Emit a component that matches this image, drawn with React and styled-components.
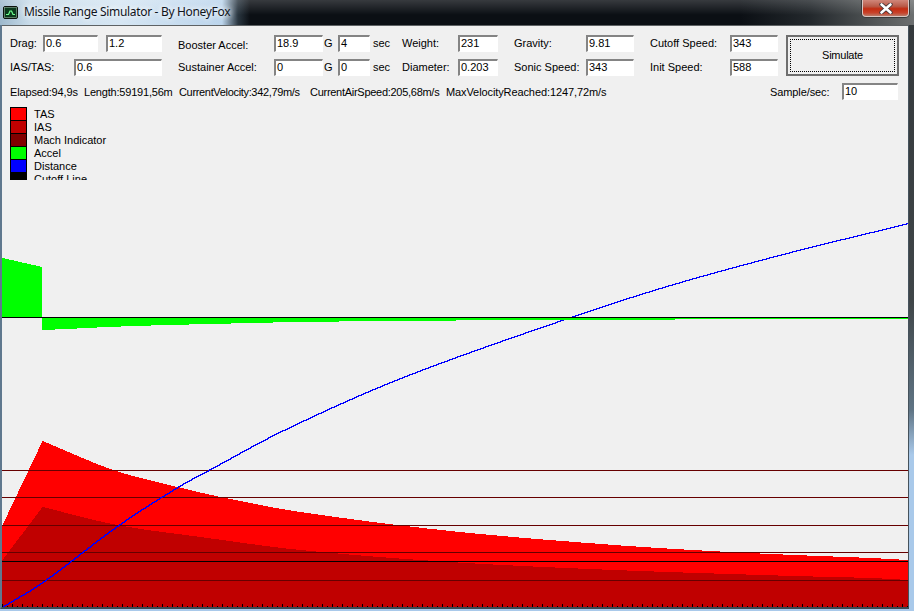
import React from "react";
import styled, { createGlobalStyle } from "styled-components";

const Global = createGlobalStyle`
  html, body { margin: 0; padding: 0; background: #a9c9ea; }
`;

const Desktop = styled.div`
  width: 914px;
  height: 611px;
  overflow: hidden;
  display: flex;
  flex-direction: column;
  font-family: "Liberation Sans", Arial, sans-serif;
  font-size: 11px;
  color: #000;
  background: linear-gradient(180deg, #33383b 0, #3f4548 300px, #5f7484 410px, #a9c9ea 455px, #a9c9ea 100%);
`;

const TitleBar = styled.header`
  height: 25px;
  flex: none;
  display: flex;
  align-items: flex-start;
  background:
    linear-gradient(180deg, rgba(255, 255, 255, 0.18) 0, rgba(255, 255, 255, 0) 60%),
    linear-gradient(90deg, #9db8cc 0, #c9dcea 30px, #d6e6f3 120px, #bcd5ec 222px, #2a3640 238px, #0b0f14 250px, #0b0f14 740px, #23282c 810px, #55595a 880px, #6c6f70 914px);
`;

const AppIcon = styled.svg`
  flex: none;
  width: 15px;
  height: 13px;
  margin: 6px 0 0 3px;
`;

const Title = styled.h1`
  margin: 4px 0 0 6px;
  font: 400 12px/16px "Noto Sans", "Open Sans", sans-serif;
  letter-spacing: -0.32px;
  color: #10141c;
  white-space: nowrap;
  text-shadow: 0 0 6px #fff, 0 0 6px #fff;
`;

const CloseButton = styled.div`
  width: 47px;
  height: 17px;
  margin-left: auto;
  margin-right: 5px;
  flex: none;
  display: flex;
  align-items: center;
  justify-content: center;
  box-sizing: border-box;
  border: 1px solid #d8c8c4;
  border-top: none;
  border-radius: 0 0 4px 4px;
  box-shadow: 0 0 0 1px #3a3a3a;
  background: linear-gradient(180deg, #d0877a 0, #b85a48 40%, #c22c12 55%, #c9422a 80%, #b97a68 100%);
`;

const Body = styled.div`
  flex: 1;
  min-height: 0;
  display: flex;
  flex-direction: column;
  margin: 0 5px 2px 0;
  border-left: 2px solid #5f788e;
  border-bottom: 2px solid #3a4a52;
`;

const Client = styled.main`
  flex: 1;
  min-height: 0;
  display: flex;
  flex-direction: column;
  overflow: hidden;
  background: #f0f0f0;
  border-top: 1px solid #5e6264;
  border-right: 1px solid #45525c;
  padding-top: 9px;
`;

const Form = styled.section`
  display: flex;
  padding-left: 8px;
`;

const Params = styled.div`
  display: flex;
  flex-direction: column;
  gap: 7px;
`;

const Row = styled.div`
  display: flex;
  align-items: center;
  height: 17px;
`;

const Label = styled.span`
  flex: none;
  width: ${(p) => p.$w}px;
  margin-left: ${(p) => p.$ml || 0}px;
  padding-top: ${(p) => p.$drop || 0}px;
  white-space: nowrap;
  line-height: 13px;
`;

const Unit = styled(Label)`
  box-sizing: border-box;
  padding-left: ${(p) => p.$pl || 1}px;
`;

const Field = styled.div`
  flex: none;
  box-sizing: border-box;
  width: ${(p) => p.$w}px;
  height: 17px;
  margin-left: ${(p) => p.$ml || 0}px;
  padding: 0 0 0 1px;
  background: #fff;
  border-style: solid;
  border-width: 2px 1px 1px 2px;
  border-color: #848484 #fff #fff #848484;
  line-height: 13px;
  overflow: hidden;
`;

const SimButton = styled.div`
  flex: none;
  box-sizing: border-box;
  width: 113px;
  height: 41px;
  margin-left: 8px;
  padding: 2px;
  display: flex;
  border: 2px solid #6e6e6e;
  background: #f0f0f0;
`;

const FocusRect = styled.span`
  flex: 1;
  display: flex;
  align-items: center;
  justify-content: center;
  padding-bottom: 2px;
  letter-spacing: -0.25px;
  border: 1px dotted #000;
`;

const StatusRow = styled.section`
  display: flex;
  align-items: center;
  height: 17px;
  margin-top: 7px;
  padding: 0 10px 0 8px;
`;

const Stat = styled.span`
  flex: none;
  width: ${(p) => p.$w}px;
  padding-top: 1px;
  white-space: nowrap;
  line-height: 13px;
  letter-spacing: ${(p) => p.$ls}px;
`;

const SampleGroup = styled.div`
  margin-left: auto;
  display: flex;
  align-items: center;
`;

const SampleLabel = styled(Label)`
  padding-top: 1px;
  letter-spacing: -0.1px;
`;

const Legend = styled.ul`
  flex: none;
  list-style: none;
  height: 73px;
  margin: 7px 0 0;
  padding: 0 0 0 8px;
  overflow: hidden;
`;

const LegendItem = styled.li`
  display: flex;
  height: 13px;
  line-height: 15px;
`;

const Swatch = styled.i`
  flex: none;
  box-sizing: border-box;
  width: 17px;
  height: 13px;
  margin-right: 7px;
  border: 1px solid #000;
  border-bottom: none;
  background: ${(p) => p.$c};
`;

const ChartSvg = styled.svg`
  display: block;
  flex: none;
  width: 906px;
  height: 427px;
`;

const TAS = [[42,441],[113,470],[177,487],[225,498],[300,512],[450,531],[614,545],[729,552],[794,555],[870,558],[908,560]];
const IAS = [[42,507],[117,525],[200,537],[300,550],[450,562],[614,570],[794,576],[870,578],[908,580]];
const DIST = [[3,606],[42,582],[118,525],[177,487],[208,470],[283,430],[400,378],[570,317],[673,284],[790,252],[908,223]];
const ACCEL_UP = [[2,258],[42,267]];
const ACCEL_DOWN = [[42,330],[67,329],[86,328],[108,327],[135,326],[168,325],[210,324],[300,322],[455,320.5],[674,319.5],[908,319.2]];
const MACH_LINES = [470, 497, 525, 552, 580];

// Hermite interpolation through the sampled points, so the curves stay smooth.
const at = (pts, x) => {
  const n = pts.length;
  const slope = (i) => {
    const a = pts[Math.max(i - 1, 0)];
    const b = pts[Math.min(i + 1, n - 1)];
    return (b[1] - a[1]) / (b[0] - a[0]);
  };
  for (let i = 1; i < n; i++) {
    if (x <= pts[i][0]) {
      const [x0, y0] = pts[i - 1];
      const [x1, y1] = pts[i];
      const h = x1 - x0;
      const t = (x - x0) / h;
      const m0 = slope(i - 1) * h;
      const m1 = slope(i) * h;
      return (
        (2 * t ** 3 - 3 * t ** 2 + 1) * y0 +
        (t ** 3 - 2 * t ** 2 + t) * m0 +
        (-2 * t ** 3 + 3 * t ** 2) * y1 +
        (t ** 3 - t ** 2) * m1
      );
    }
  }
  return pts[n - 1][1];
};

const stairs = (pts, start) => {
  const from = pts[0][0];
  const to = pts[pts.length - 1][0];
  let d = start || "";
  for (let x = from; x < to; x++) {
    const y = Math.round(at(pts, x));
    d += x === from && !start ? `M${x} ${y}` : `V${y}`;
    d += `H${x + 1}`;
  }
  return d;
};

// Rising part before burnout: one pixel column per step from (x0,y0) up to the peak.
const rise = (x0, y0, pts) => {
  const [px, py] = pts[0];
  let d = `M${x0} ${y0}`;
  for (let x = x0; x < px; x++) {
    const y = Math.round(y0 + ((py - y0) * (x - x0)) / (px - x0));
    d += `V${y}H${x + 1}`;
  }
  return d;
};

const speedArea = (x0, y0, pts, base) => `${stairs(pts, rise(x0, y0, pts))}V${base}H${x0}Z`;
const areaTo = (pts, base) => `${stairs(pts)}V${base}H${pts[0][0]}Z`;

const linePath = (pts) => {
  const from = pts[0][0];
  const to = pts[pts.length - 1][0];
  let d = "";
  for (let x = from; x < to; x++) {
    const y = Math.round(at(pts, x)) + 0.5;
    d += `${x === from ? "M" : "L"}${x} ${y}L${x + 1} ${y}`;
  }
  return d;
};

const ticks = () => {
  let d = "";
  for (let x = 2; x < 908; x += 10) {
    d += `M${x + 0.5} 604V607M${x + 5.5} 606V607`;
  }
  return d;
};

const Chart = () => (
  <ChartSvg viewBox="2 180 906 427" shapeRendering="crispEdges">
    <path d={speedArea(2, 525, TAS, 607)} fill="#ff0000" />
    <path d={speedArea(2, 560, IAS, 607)} fill="#c00000" />
    {MACH_LINES.map((y) => (
      <line key={y} x1="2" x2="908" y1={y + 0.5} y2={y + 0.5} stroke="#660000" />
    ))}
    <line x1="2" x2="908" y1="561.5" y2="561.5" stroke="#000" />
    <path d={linePath(DIST)} fill="none" stroke="#0000ff" />
    <path d={areaTo(ACCEL_UP, 318)} fill="#00ff00" />
    <path d={areaTo(ACCEL_DOWN, 317)} fill="#00ff00" />
    <line x1="2" x2="908" y1="317.5" y2="317.5" stroke="#000" />
    <path d={ticks()} stroke="#000" fill="none" />
  </ChartSvg>
);

const legend = [
  ["TAS", "#ff0000"],
  ["IAS", "#c00000"],
  ["Mach Indicator", "#800000"],
  ["Accel", "#00ff00"],
  ["Distance", "#0000ff"],
  ["Cutoff Line", "#000000"],
];

const ParamTail = ({ accel, accelDrop, g, secs, l3, v3, l4, v4, l5, v5 }) => (
  <>
    <Label $ml={16} $w={96} $drop={accelDrop}>{accel}</Label>
    <Field $w={49}>{g}</Field>
    <Unit $w={15}>G</Unit>
    <Field $w={32}>{secs}</Field>
    <Unit $w={32} $pl={3}>sec</Unit>
    <Label $w={56}>{l3}</Label>
    <Field $w={40}>{v3}</Field>
    <Label $ml={16} $w={72}>{l4}</Label>
    <Field $w={48}>{v4}</Field>
    <Label $ml={16} $w={80}>{l5}</Label>
    <Field $w={48}>{v5}</Field>
  </>
);

export default function App() {
  return (
    <Desktop>
      <Global />
      <TitleBar>
        <AppIcon viewBox="0 0 15 13">
          <rect x="0.5" y="0.5" width="14" height="12" rx="1.5" fill="#0a3a1c" stroke="#0c120e" />
          <rect x="1.500" y="1.500" width="12" height="10" fill="none" stroke="#7f9a88" strokeWidth="0.7" />
          <path d="M3 8.500h2.500l1.500-3.500h1.500l1.500 3.500H12" fill="none" stroke="#6dff90" strokeWidth="1.200" />
        </AppIcon>
        <Title>Missile Range Simulator - By HoneyFox</Title>
        <CloseButton>
          <svg width="14" height="11" viewBox="0 0 14 11">
            <path d="M2.500 1.500L11.500 9.500M11.500 1.500L2.500 9.500" stroke="#3a3034" strokeWidth="4.200" strokeLinecap="round" />
            <path d="M2.500 1.500L11.500 9.500M11.500 1.500L2.500 9.500" stroke="#fff" strokeWidth="2.600" strokeLinecap="round" />
          </svg>
        </CloseButton>
      </TitleBar>
      <Body>
        <Client>
          <Form>
            <Params>
              <Row>
                <Label $w={33}>Drag:</Label>
                <Field $w={55}>0.6</Field>
                <Field $w={56} $ml={8}>1.2</Field>
                <ParamTail accel="Booster Accel:" accelDrop={3} g="18.9" secs="4" l3="Weight:" v3="231" l4="Gravity:" v4="9.81" l5="Cutoff Speed:" v5="343" />
              </Row>
              <Row>
                <Label $w={64}>IAS/TAS:</Label>
                <Field $w={88}>0.6</Field>
                <ParamTail accel="Sustainer Accel:" g="0" secs="0" l3="Diameter:" v3="0.203" l4="Sonic Speed:" v4="343" l5="Init Speed:" v5="588" />
              </Row>
            </Params>
            <SimButton>
              <FocusRect>Simulate</FocusRect>
            </SimButton>
          </Form>
          <StatusRow>
            <Stat $w={74} $ls={-0.15}>Elapsed:94,9s</Stat>
            <Stat $w={95} $ls={-0.2}>Length:59191,56m</Stat>
            <Stat $w={131} $ls={-0.33}>CurrentVelocity:342,79m/s</Stat>
            <Stat $w={136} $ls={-0.28}>CurrentAirSpeed:205,68m/s</Stat>
            <Stat $w={165} $ls={-0.1}>MaxVelocityReached:1247,72m/s</Stat>
            <SampleGroup>
              <SampleLabel $w={72}>Sample/sec:</SampleLabel>
              <Field $w={56}>10</Field>
            </SampleGroup>
          </StatusRow>
          <Legend>
            {legend.map(([name, color]) => (
              <LegendItem key={name}>
                <Swatch $c={color} />
                {name}
              </LegendItem>
            ))}
          </Legend>
          <Chart />
        </Client>
      </Body>
    </Desktop>
  );
}
